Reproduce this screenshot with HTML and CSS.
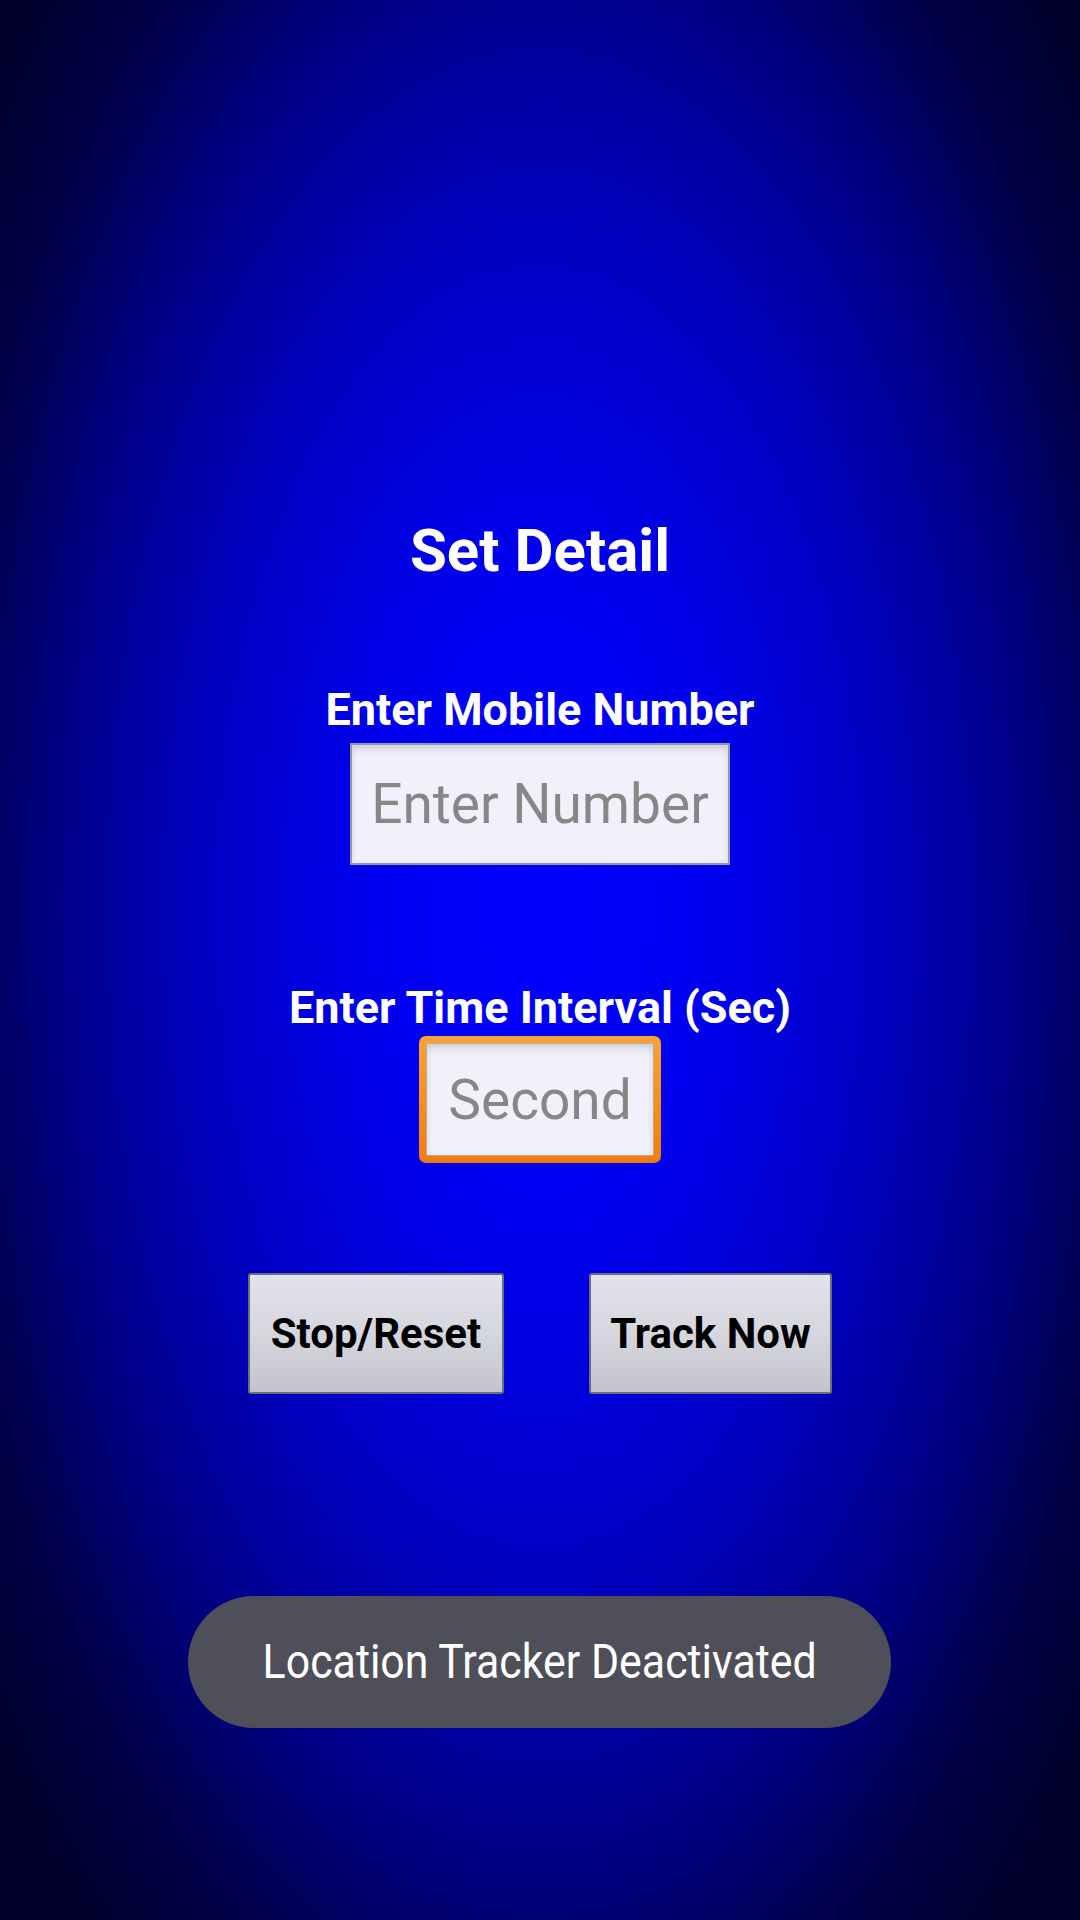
FILE: index.html
```html
<!DOCTYPE html>
<html lang="en">
<head>
<meta charset="utf-8">
<title>Set Detail</title>
<link rel="stylesheet" href="styles.css">
</head>
<body>
<main class="screen">
  <h1 class="title">Set Detail</h1>
  <label class="label label-number" for="num">Enter Mobile Number</label>
  <input id="num" class="field field-number" type="text" placeholder="Enter Number">
  <label class="label label-time" for="sec">Enter Time Interval (Sec)</label>
  <div class="focus-ring">
    <input id="sec" class="field field-second" type="text" placeholder="Second">
  </div>
  <div class="actions">
    <button class="btn btn-stop" type="button">Stop/Reset</button>
    <button class="btn btn-track" type="button">Track Now</button>
  </div>
  <div class="toast"><span class="toast-text">Location Tracker Deactivated</span></div>
</main>
</body>
</html>
```

FILE: styles.css
```css
html, body {
  margin: 0;
  padding: 0;
}

body {
  width: 1080px;
  height: 1920px;
  overflow: hidden;
  font-family: Roboto, "Noto Sans", "Liberation Sans", sans-serif;
  background: #000010;
}

.screen {
  position: relative;
  width: 1080px;
  height: 1920px;
  box-sizing: border-box;
  padding-top: 515px;
  display: flex;
  flex-direction: column;
  align-items: center;
  background: radial-gradient(ellipse 690px 1360px at 540px 906px,
    #0000ff 0%,
    #0000ef 25%,
    #0000c0 50%,
    #000086 70%,
    #00004c 85%,
    #00002a 100%);
}

.title {
  margin: 0;
  font-size: 60px;
  line-height: 71px;
  font-weight: 700;
  color: #ffffff;
}

.label {
  display: block;
  font-size: 45px;
  line-height: 52px;
  font-weight: 700;
  color: #ffffff;
}

.label-number {
  margin-top: 98px;
}

.label-time {
  margin-top: 117px;
}

.field {
  box-sizing: border-box;
  margin: 0;
  padding: 0;
  font-family: Roboto, "Noto Sans", sans-serif;
  font-size: 55px;
  text-align: center;
  color: #333333;
  outline: none;
  border: 2px solid #9696a6;
  background: linear-gradient(180deg, #e4e4ee 0px, #f1f1fb 14px, #f1f1fb 100%);
  box-shadow: inset 0 2px 6px rgba(120, 120, 150, 0.25);
}

.field::placeholder {
  color: #878787;
  opacity: 1;
}

.field-number {
  margin-top: 7px;
  width: 380px;
  height: 122px;
}

.focus-ring {
  margin-top: 2px;
  padding: 7px;
  border-radius: 7px;
  background: linear-gradient(180deg, #f9a334 0%, #f28d1c 60%, #ef7c0c 100%);
  display: flex;
}

.field-second {
  width: 228px;
  height: 113px;
  border: 1px solid #c9a97f;
}

.actions {
  margin-top: 110px;
  display: flex;
  gap: 85px;
}

.btn {
  box-sizing: border-box;
  height: 121px;
  padding: 0;
  border: 2px solid #6d6d78;
  border-radius: 3px;
  background: linear-gradient(180deg, #e2e2ea 0%, #d6d6de 50%, #c3c3cb 100%);
  font-family: Roboto, "Noto Sans", sans-serif;
  font-size: 42px;
  font-weight: 700;
  color: #000000;
}

.btn-stop {
  width: 256px;
}

.btn-track {
  width: 243px;
}

.toast {
  position: absolute;
  left: 188px;
  top: 1596px;
  width: 703px;
  height: 132px;
  border-radius: 66px;
  background: #4f4f59;
  display: flex;
  align-items: center;
  justify-content: center;
}

.toast-text {
  display: inline-block;
  font-size: 49px;
  line-height: 58px;
  color: #ffffff;
  white-space: nowrap;
  transform: scaleX(0.875);
}
```
